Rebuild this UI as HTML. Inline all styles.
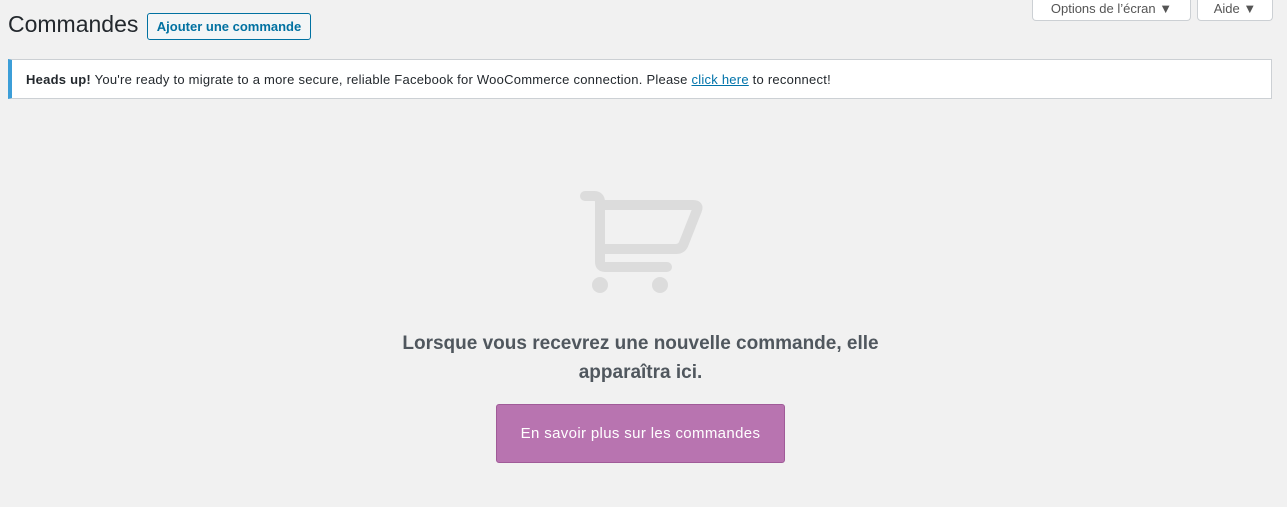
<!DOCTYPE html>
<html><head><style>
body{margin:0;width:1287px;height:507px;background:#f1f1f1;font-family:"Liberation Sans",sans-serif;color:#23282d;position:relative;overflow:hidden}
h1{position:absolute;left:8px;top:11px;margin:0;font-size:23px;font-weight:400;color:#23282d}
.add{position:absolute;left:147px;top:13px;width:162px;height:25px;border:1px solid #0071a1;border-radius:3px;color:#0071a1;font-size:13px;font-weight:bold;line-height:25px;text-align:center;background:#f3f5f6}
.tab{position:absolute;top:-4px;background:#fff;border:1px solid #ccd0d4;border-top:none;border-radius:0 0 4px 4px;font-size:13px;color:#555;line-height:20px;text-align:center;padding-top:3px;box-sizing:border-box;height:25px}
.notice{position:absolute;left:8px;top:59px;width:1264px;height:40px;background:#fff;border:1px solid #ccd0d4;border-left:4px solid #3c9ed8;box-sizing:border-box;font-size:13px;line-height:39px;padding-left:14px;color:#23282d;letter-spacing:0.24px}
.notice a{color:#0073aa}
.msg{position:absolute;left:0;width:1281px;top:329px;text-align:center;font-size:19px;font-weight:bold;color:#50575e;line-height:29px}
.btn{position:absolute;left:496px;top:404px;width:289px;height:59px;background:#b874b0;border:1px solid #a05b98;box-sizing:border-box;border-radius:3px;color:#fff;font-size:15px;line-height:58px;text-align:center;letter-spacing:0.35px}
</style></head><body>
<h1>Commandes</h1>
<div class="add">Ajouter une commande</div>
<div class="tab" style="left:1032px;width:159px">Options de l’écran ▼</div>
<div class="tab" style="left:1197px;width:76px">Aide ▼</div>
<div class="notice"><b>Heads up!</b> You're ready to migrate to a more secure, reliable Facebook for WooCommerce connection. Please <a href="#">click here</a> to reconnect!</div>
<svg style="position:absolute;left:0;top:0" width="1287" height="507">
<g fill="none" stroke="#dcdcdc" stroke-width="10" stroke-linecap="round" stroke-linejoin="round">
<path d="M585,196 H594 Q600,196 600,202 V262 Q600,267 605,267 H667"/>
<path d="M602,205 H693 Q699,205 697,210 L684,243 Q682,249 676,249 H603"/>
</g>
<circle cx="600" cy="285" r="8" fill="#dcdcdc"/>
<circle cx="660" cy="285" r="8" fill="#dcdcdc"/>
</svg>
<div class="msg">Lorsque vous recevrez une nouvelle commande, elle<br>apparaîtra ici.</div>
<div class="btn">En savoir plus sur les commandes</div>
</body></html>
